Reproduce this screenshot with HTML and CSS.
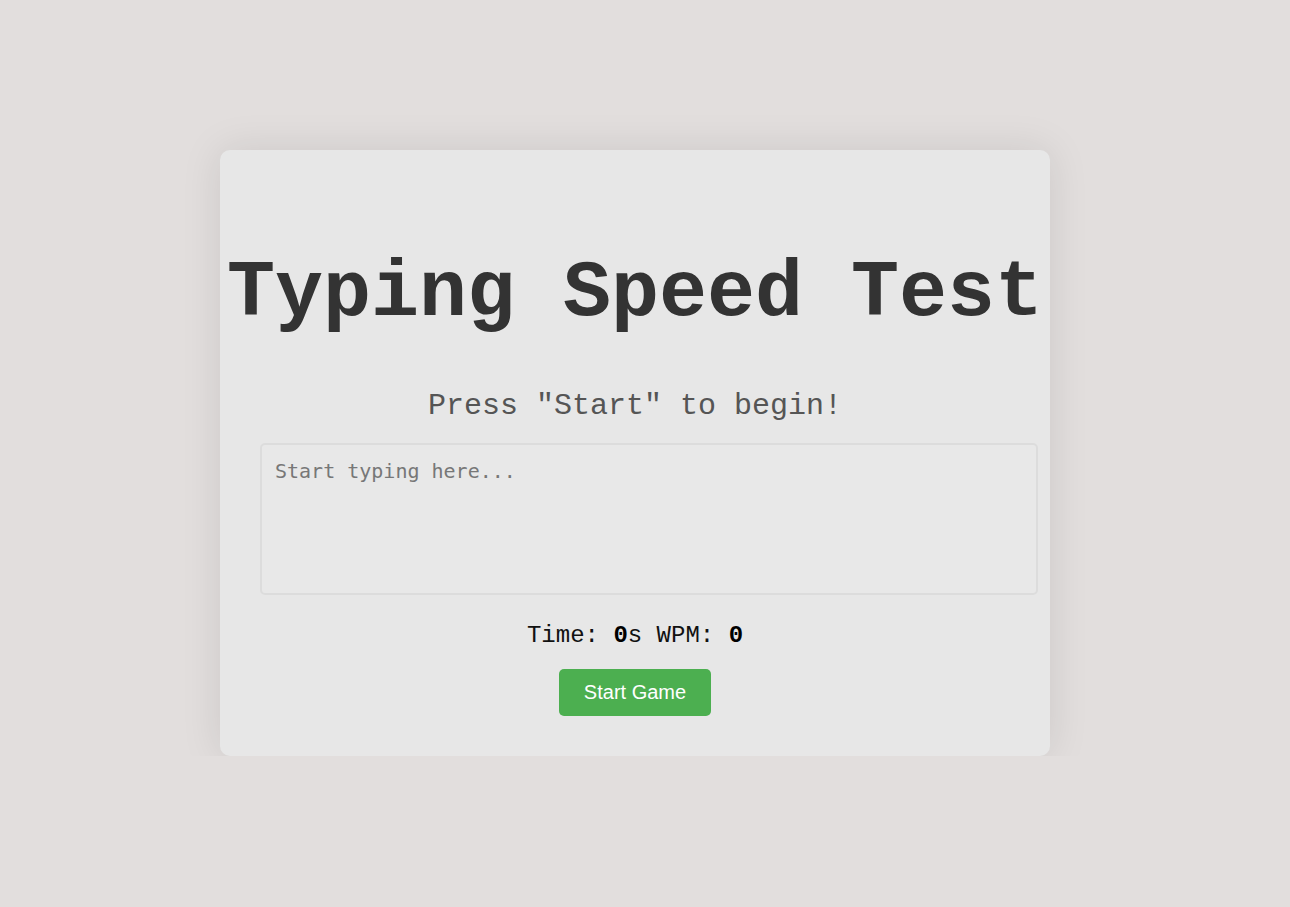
FILE: index.html
```html
<!DOCTYPE html>
<html lang="en">
<head>
  <meta charset="UTF-8" />
  <meta name="viewport" content="width=device-width, initial-scale=1.0" />
  <title>Typing Speed Test</title>
  <link rel="stylesheet" href="styles.css">
</head>
<body>
  <div class="container">
    <h1>Typing Speed Test</h1>
    <p id="mensaje" class="mensaje">Press "Start" to begin!</p>
    <textarea id="entrada" placeholder="Start typing here..." disabled></textarea>
    <div class="stats">Time: <b id="tiempo">0</b>s WPM: <b id="wpm">0</b></div>
    <button id="btnStart">Start Game</button>
  </div>
</body>
</html>
```

FILE: styles.css
```css
body {
  font-family: 'Liberation Mono', 'Courier New', monospace;
  background: #e2dedd;
  margin: 0;
  padding: 0;
}
.container {
  background: #e7e7e7;
  border-radius: 10px;
  box-shadow: 0 0 40px rgba(0, 0, 0, 0.1);
  width: 830px;
  margin: 150px 0 0 calc(50% - 425px);
  padding: 98px 0 40px;
  box-sizing: border-box;
  display: flex;
  flex-direction: column;
  align-items: center;
}
h1 {
  font-size: 80px;
  font-weight: bold;
  color: #333;
  margin: 0;
  white-space: nowrap;
}
.mensaje {
  font-size: 30px;
  color: #555;
  margin: 50px 0 20px;
}
textarea {
  width: 778px;
  height: 152px;
  box-sizing: border-box;
  margin-left: 28px;
  padding: 14px 13px;
  border: 2px solid #dcdcdc;
  border-radius: 5px;
  background: #e8e8e8;
  font-family: 'DejaVu Sans Mono', monospace;
  font-size: 20px;
  resize: none;
  outline: none;
}
textarea::placeholder {
  color: #777;
}
.stats {
  font-size: 24px;
  color: #111;
  margin: 27px 0 20px;
}
.stats b {
  color: #000;
}
button {
  background-color: #4caf50;
  color: white;
  font-family: 'Liberation Sans', Arial, sans-serif;
  font-size: 20px;
  width: 152px;
  height: 47px;
  border: none;
  border-radius: 5px;
  cursor: pointer;
}
button:hover {
  background-color: #45a049;
}
```
